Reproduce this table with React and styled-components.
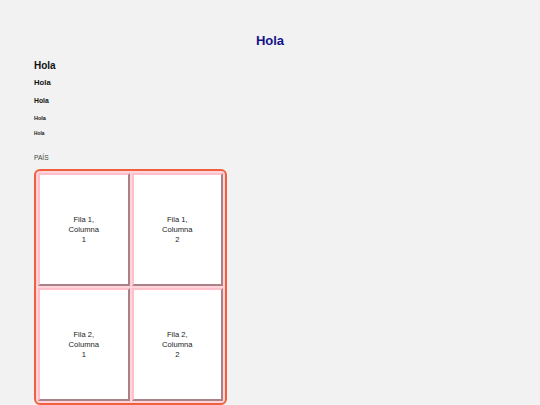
import React from "react";
import styled, { createGlobalStyle } from "styled-components";

const GlobalStyle = createGlobalStyle`
  html, body {
    margin: 0;
    padding: 0;
    background: #f2f2f2;
    font-family: "Liberation Sans", Arial, sans-serif;
  }
`;

const Page = styled.div`
  display: flex;
  flex-direction: column;
  padding: 28px 0 0 34px;
`;

const Title = styled.h1`
  margin: 0 0 2px -34px;
  height: 26px;
  line-height: 26px;
  font-size: 13px;
  font-weight: bold;
  color: #14148a;
  text-align: center;
`;

const Heading = styled.div`
  margin: 0;
  height: ${(p) => p.$h}px;
  line-height: ${(p) => p.$h}px;
  font-size: ${(p) => p.$size}px;
  font-weight: bold;
  color: #111;
`;

const Label = styled.div`
  margin: 9px 0 4px;
  height: 14px;
  line-height: 14px;
  font-size: 6.6px;
  color: #444;
  text-transform: uppercase;
`;

const Table = styled.table`
  border-collapse: separate;
  border-spacing: 2px;
  border: 2px solid #f0603e;
  border-radius: 6px;
  background: #ffd3da;
  width: 193px;
`;

const Cell = styled.td`
  width: 88px;
  height: 109px;
  padding: 0;
  border: 2px outset pink;
  background: #fff;
  text-align: center;
  vertical-align: middle;
  font-size: 7.6px;
  line-height: 10px;
  color: #222;
`;

const CellText = styled.span`
  display: inline-block;
  max-width: 34px;
`;

const rows = [1, 2];
const cols = [1, 2];

export default function App() {
  return (
    <>
      <GlobalStyle />
      <Page>
        <Title>Hola</Title>
        <Heading as="h2" $size={10} $h={19}>Hola</Heading>
        <Heading as="h3" $size={7.7} $h={16}>Hola</Heading>
        <Heading as="h4" $size={6.8} $h={20}>Hola</Heading>
        <Heading as="h5" $size={5.5} $h={15}>Hola</Heading>
        <Heading as="h6" $size={4.8} $h={16}>Hola</Heading>
        <Label>País</Label>
        <Table>
          <tbody>
            {rows.map((r) => (
              <tr key={r}>
                {cols.map((c) => (
                  <Cell key={c}>
                    <CellText>
                      Fila {r}, Columna {c}
                    </CellText>
                  </Cell>
                ))}
              </tr>
            ))}
          </tbody>
        </Table>
      </Page>
    </>
  );
}
